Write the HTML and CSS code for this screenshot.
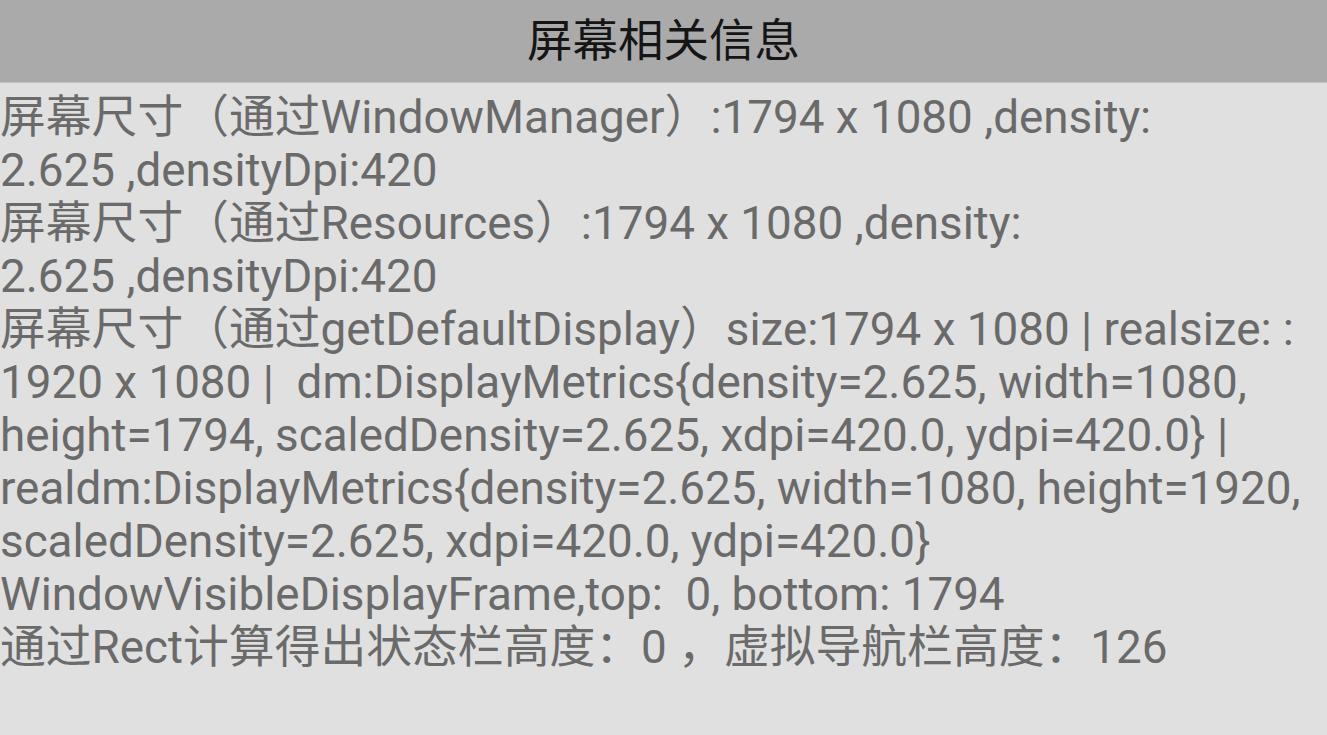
FILE: index.html
```html
<!DOCTYPE html>
<html lang="zh-CN">
<head>
<meta charset="utf-8">
<title>屏幕相关信息</title>
<link rel="stylesheet" href="styles.css">
</head>
<body>
<div class="app">
  <header class="titlebar"><h1 class="title">屏幕相关信息</h1></header>
  <main class="content">
    <p class="info">屏幕尺寸（通过WindowManager）:1794 x 1080 ,density:<br>2.625 ,densityDpi:420</p>
    <p class="info">屏幕尺寸（通过Resources）:1794 x 1080 ,density:<br>2.625 ,densityDpi:420</p>
    <p class="info">屏幕尺寸（通过getDefaultDisplay）size:1794 x 1080 | realsize: :<br>1920 x 1080 |  dm:DisplayMetrics{density=2.625, width=1080,<br>height=1794, scaledDensity=2.625, xdpi=420.0, ydpi=420.0} |<br>realdm:DisplayMetrics{density=2.625, width=1080, height=1920,<br>scaledDensity=2.625, xdpi=420.0, ydpi=420.0}</p>
    <p class="info">WindowVisibleDisplayFrame,top:  0, bottom: 1794</p>
    <p class="info">通过Rect计算得出状态栏高度：0 ，虚拟导航栏高度：126</p>
  </main>
</div>
</body>
</html>
```
FILE: styles.css
```css
html, body {
  margin: 0;
  padding: 0;
  height: 100%;
}
body {
  background: #e0e0e0;
  font-family: Roboto, "Noto Sans CJK SC", sans-serif;
  overflow: hidden;
}
.app {
  display: flex;
  flex-direction: column;
  height: 100%;
}
.titlebar {
  height: 82px;
  background: #aaaaaa;
  border-bottom: 1px solid #c4c4c4;
  display: flex;
  align-items: center;
  justify-content: center;
  flex-shrink: 0;
}
.title {
  margin: 0;
  font-size: 45.5px;
  font-weight: normal;
  color: #151515;
  line-height: 53px;
  font-family: Roboto, "Noto Sans CJK SC", sans-serif;
}
.content {
  padding: 8px 0 0 0;
}
.info {
  margin: 0;
  font-size: 45.8px;
  line-height: 53px;
  color: #6a6a6a;
  white-space: pre;
}
```
